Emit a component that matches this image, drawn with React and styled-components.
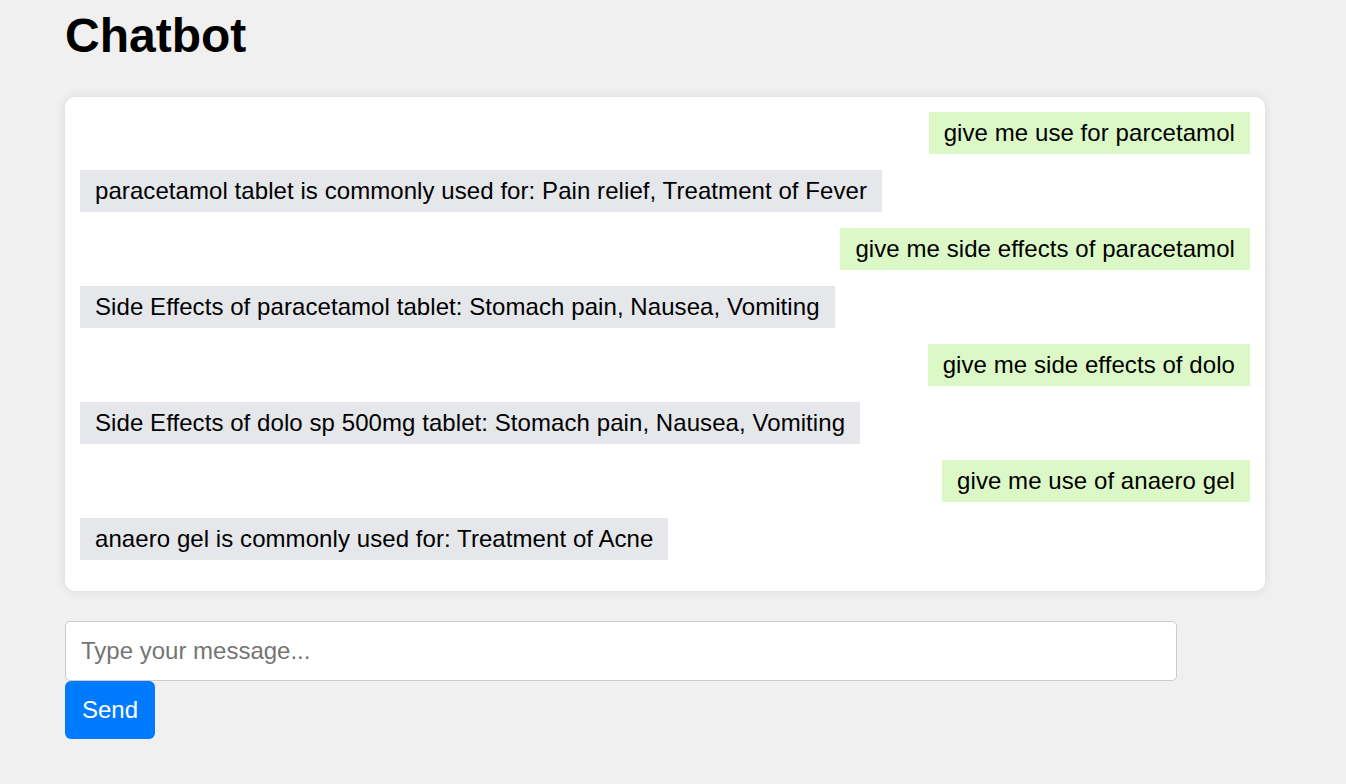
import styled, { createGlobalStyle } from 'styled-components'

const GlobalStyle = createGlobalStyle`
  body {
    margin: 0;
    background-color: #f0f0f0;
    font-family: 'Liberation Sans', Arial, sans-serif;
  }
`

const Page = styled.div`
  padding: 8px 0 0 65px;
`

const Title = styled.h1`
  margin: 0 0 34px 0;
  font-size: 48px;
  line-height: 55px;
  font-weight: bold;
  color: #000;
`

const ChatBox = styled.div`
  width: 1200px;
  box-sizing: border-box;
  padding: 15px 15px 15px;
  background-color: #fff;
  border-radius: 10px;
  box-shadow: 0 0 10px rgba(0, 0, 0, 0.1);
  display: flex;
  flex-direction: column;
`

const Message = styled.div`
  align-self: ${({ fromUser }) => (fromUser ? 'flex-end' : 'flex-start')};
  background-color: ${({ fromUser }) => (fromUser ? '#dcf8c6' : '#e5e7eb')};
  padding: 7px 15px;
  margin-bottom: 16px;
  font-size: 24px;
  line-height: 28px;
  letter-spacing: 0.07px;
  color: #000;
`

const InputArea = styled.div`
  margin-top: 30px;
  display: flex;
  flex-direction: column;
  align-items: flex-start;
`

const MessageInput = styled.input`
  width: 1112px;
  height: 60px;
  box-sizing: border-box;
  padding: 0 15px;
  border: 1px solid #ccc;
  border-radius: 5px;
  font-family: 'Liberation Sans', Arial, sans-serif;
  font-size: 24px;
  color: #000;
  background: #fff;
  outline: none;
  &::placeholder {
    color: #757575;
  }
`

const SendButton = styled.button`
  width: 90px;
  height: 58px;
  border: none;
  border-radius: 6px;
  background-color: #007bff;
  color: #fff;
  font-family: 'Liberation Sans', Arial, sans-serif;
  font-size: 24px;
  cursor: pointer;
`

const messages = [
  { fromUser: true, text: 'give me use for parcetamol' },
  { fromUser: false, text: 'paracetamol tablet is commonly used for: Pain relief, Treatment of Fever' },
  { fromUser: true, text: 'give me side effects of paracetamol' },
  { fromUser: false, text: 'Side Effects of paracetamol tablet: Stomach pain, Nausea, Vomiting' },
  { fromUser: true, text: 'give me side effects of dolo' },
  { fromUser: false, text: 'Side Effects of dolo sp 500mg tablet: Stomach pain, Nausea, Vomiting' },
  { fromUser: true, text: 'give me use of anaero gel' },
  { fromUser: false, text: 'anaero gel is commonly used for: Treatment of Acne' }
]

function App() {
  return (
    <>
      <GlobalStyle />
      <Page>
        <Title>Chatbot</Title>
        <ChatBox>
          {messages.map((m, i) => (
            <Message key={i} fromUser={m.fromUser}>
              {m.text}
            </Message>
          ))}
        </ChatBox>
        <InputArea>
          <MessageInput type="text" placeholder="Type your message..." />
          <SendButton>Send</SendButton>
        </InputArea>
      </Page>
    </>
  )
}

export default App
